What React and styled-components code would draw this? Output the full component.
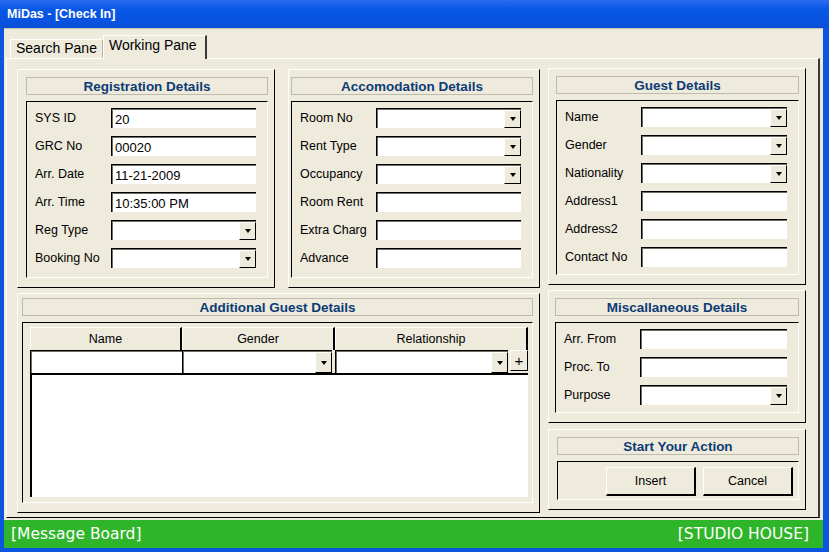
import React from "react";
import styled, { createGlobalStyle } from "styled-components";

const GlobalStyle = createGlobalStyle`
  html, body {
    margin: 0;
    padding: 0;
    background: #eeeadc;
  }
  body {
    font-family: "Liberation Sans", Arial, sans-serif;
    font-size: 12px;
    color: #000;
  }
`;

const Window = styled.div`
  width: 829px;
  height: 552px;
  display: flex;
  flex-direction: column;
  background: #0b55e0;
  overflow: hidden;
`;

const TitleBar = styled.div`
  height: 28px;
  flex: none;
  display: flex;
  align-items: center;
  padding-left: 7px;
  color: #fff;
  font-weight: bold;
  font-size: 12.5px;
  background: linear-gradient(#2a6cf0, #0a58e6 30%, #0853e0 75%, #0a4fd6);
`;

const Frame = styled.div`
  flex: 1;
  display: flex;
  flex-direction: column;
  padding: 0 6px 4px 4px;
  min-height: 0;
`;

const Client = styled.div`
  flex: 1;
  display: flex;
  flex-direction: column;
  background: #eeeadc;
  border-top: 1px solid #c9c4ae;
  padding: 6px 3px 2px 2px;
  min-height: 0;
`;

const TabStrip = styled.div`
  display: flex;
  align-items: flex-end;
  height: 23px;
  padding-left: 4px;
  position: relative;
  z-index: 1;
`;

const Tab = styled.div`
  box-sizing: border-box;
  height: ${(p) => (p.$active ? "24px" : "19px")};
  margin-bottom: ${(p) => (p.$active ? "-1px" : "0")};
  padding: 0 ${(p) => (p.$active ? "8px" : "5px")} 0 5px;
  display: flex;
  align-items: center;
  font-size: 14px;
  background: #eeeadc;
  border-top: 1px solid #fff;
  border-left: 1px solid #fff;
  border-right: ${(p) => (p.$active ? "2px solid #3a3a3a" : "1px solid #b9b5a2")};
  padding-top: 0;
  padding-bottom: ${(p) => (p.$active ? "6px" : "2px")};
`;

const TabPage = styled.div`
  flex: 1;
  display: flex;
  gap: 8px;
  border-top: 1px solid #fff;
  border-left: 1px solid #fff;
  border-right: 2px solid #3a3a3a;
  border-bottom: 1px solid #000;
  padding: 10px 0 0 10px;
  min-height: 0;
`;

const LeftCol = styled.div`
  width: 523px;
  display: flex;
  flex-direction: column;
  gap: 5px;
`;

const TopRow = styled.div`
  display: flex;
  gap: 13px;
`;

const RightCol = styled.div`
  width: 258px;
  display: flex;
  flex-direction: column;
  gap: 5px;
  margin-top: -1px;
`;

const Group = styled.div`
  box-sizing: border-box;
  width: ${(p) => p.$w || "auto"};
  height: ${(p) => p.$h};
  margin-top: ${(p) => p.$mt || "0"};
  display: flex;
  flex-direction: column;
  border-top: 1px solid #fff;
  border-left: 1px solid #fff;
  border-right: 1px solid #000;
  border-bottom: 1px solid #000;
  padding: ${(p) => p.$pt || "7px"} 6px 9px ${(p) => p.$pl || "7px"};
`;

const Header = styled.div`
  flex: none;
  box-sizing: border-box;
  height: 18px;
  margin-bottom: 6px;
  border: 1px solid #bdbab0;
  display: flex;
  align-items: center;
  justify-content: center;
  font-weight: bold;
  font-size: 13.5px;
  color: #0c3b77;
`;

const Inner = styled.div`
  flex: 1;
  min-height: 0;
  display: flex;
  flex-direction: column;
  border-top: 1px solid #000;
  border-left: 1px solid #000;
  border-right: 1px solid #fff;
  border-bottom: 1px solid #fff;
  padding: ${(p) => p.$pad || "6px 11px 8px 8px"};
`;

const Form = styled.div`
  display: grid;
  grid-template-columns: 76px 1fr;
  grid-auto-rows: 20px;
  row-gap: 8px;
`;

const Label = styled.div`
  display: flex;
  align-items: center;
  white-space: nowrap;
  font-size: 12.5px;
`;

const Field = styled.div`
  box-sizing: border-box;
  height: ${(p) => p.$h || "20px"};
  position: relative;
  background: #fff;
  border-top: 1px solid #000;
  border-left: 1px solid #000;
  box-shadow: inset 1px 1px 0 #6f6c62;
  display: flex;
  align-items: center;
  padding: 1px 0 0 3px;
  font-size: 13px;
  white-space: nowrap;
  overflow: hidden;
`;

const Arrow = styled.div`
  position: absolute;
  right: 0;
  top: 1px;
  bottom: 0;
  width: 17px;
  box-sizing: border-box;
  background: #eeeadc;
  border-top: 1px solid #fff;
  border-left: 1px solid #fff;
  border-right: 1px solid #000;
  border-bottom: 1px solid #000;
  display: flex;
  align-items: center;
  justify-content: center;
  &::after {
    content: "";
    width: 0;
    height: 0;
    border-left: 3.5px solid transparent;
    border-right: 3.5px solid transparent;
    border-top: 4px solid #000;
  }
`;

const Table = styled.div`
  flex: 1;
  display: grid;
  grid-template-columns: 152px 153px 1fr;
  grid-template-rows: 23px 23px 1fr;
`;

const ColHead = styled.div`
  box-sizing: border-box;
  display: flex;
  align-items: center;
  justify-content: center;
  font-size: 12.5px;
  border-top: 1px solid #fff;
  border-left: 1px solid #fff;
  border-right: 2px solid #000;
`;

const Cell = styled.div`
  display: flex;
  gap: 2px;
  padding-right: ${(p) => p.$pr || "0"};
  & > ${Field} {
    flex: 1;
    height: 23px;
  }
`;

const PlusButton = styled.div`
  box-sizing: border-box;
  width: 18px;
  height: 21px;
  display: flex;
  align-items: center;
  justify-content: center;
  font-size: 15px;
  background: #eeeadc;
  border-top: 1px solid #fff;
  border-left: 1px solid #fff;
  border-right: 1px solid #000;
  border-bottom: 1px solid #000;
`;

const List = styled.div`
  grid-column: 1 / -1;
  background: #fff;
  border-top: 2px solid #000;
  border-left: 2px solid #000;
`;

const Actions = styled.div`
  display: flex;
  justify-content: flex-end;
  gap: 7px;
`;

const Button = styled.div`
  box-sizing: border-box;
  width: 90px;
  height: 29px;
  display: flex;
  align-items: center;
  justify-content: center;
  font-size: 12.5px;
  background: #eeeadc;
  border-top: 1px solid #fff;
  border-left: 1px solid #fff;
  border-right: 2px solid #000;
  border-bottom: 2px solid #000;
`;

const StatusBar = styled.div`
  flex: none;
  height: 28px;
  display: flex;
  align-items: center;
  justify-content: space-between;
  padding: 0 14px 0 7px;
  background: #2fb52a;
  color: #fff;
  font-family: "DejaVu Sans", Verdana, sans-serif;
  font-size: 15.5px;
`;

const Row = ({ label, value, combo }) => (
  <>
    <Label>{label}</Label>
    <Field>
      {value}
      {combo && <Arrow />}
    </Field>
  </>
);

const registration = [
  { label: "SYS ID", value: "20" },
  { label: "GRC No", value: "00020" },
  { label: "Arr. Date", value: "11-21-2009" },
  { label: "Arr. Time", value: "10:35:00 PM" },
  { label: "Reg Type", combo: true },
  { label: "Booking No", combo: true },
];

const accommodation = [
  { label: "Room No", combo: true },
  { label: "Rent Type", combo: true },
  { label: "Occupancy", combo: true },
  { label: "Room Rent" },
  { label: "Extra Charg" },
  { label: "Advance" },
];

const guest = [
  { label: "Name", combo: true },
  { label: "Gender", combo: true },
  { label: "Nationality", combo: true },
  { label: "Address1" },
  { label: "Address2" },
  { label: "Contact No" },
];

const misc = [
  { label: "Arr. From" },
  { label: "Proc. To" },
  { label: "Purpose", combo: true },
];

const FormGroup = ({ title, rows, ...rest }) => (
  <Group {...rest}>
    <Header>{title}</Header>
    <Inner>
      <Form>
        {rows.map((r) => (
          <Row key={r.label} {...r} />
        ))}
      </Form>
    </Inner>
  </Group>
);

export default function App() {
  return (
    <>
      <GlobalStyle />
      <Window>
        <TitleBar>MiDas - [Check In]</TitleBar>
        <Frame>
          <Client>
            <TabStrip>
              <Tab>Search Pane</Tab>
              <Tab $active>Working Pane</Tab>
            </TabStrip>
            <TabPage>
              <LeftCol>
                <TopRow>
                  <FormGroup title="Registration Details" rows={registration} $w="258px" $h="219px" $pl="8px" />
                  <FormGroup title="Accomodation Details" rows={accommodation} $w="252px" $h="219px" $pl="2px" />
                </TopRow>
                <Group $h="220px" $pl="4px" $pt="4px">
                  <Header>Additional Guest Details</Header>
                  <Inner $pad="4px 4px 5px 7px">
                    <Table>
                      <ColHead>Name</ColHead>
                      <ColHead>Gender</ColHead>
                      <ColHead>Relationship</ColHead>
                      <Cell>
                        <Field />
                      </Cell>
                      <Cell $pr="3px">
                        <Field>
                          <Arrow />
                        </Field>
                      </Cell>
                      <Cell>
                        <Field>
                          <Arrow />
                        </Field>
                        <PlusButton>+</PlusButton>
                      </Cell>
                      <List />
                    </Table>
                  </Inner>
                </Group>
              </LeftCol>
              <RightCol>
                <FormGroup title="Guest Details" rows={guest} $h="217px" />
                <FormGroup title="Miscallaneous Details" rows={misc} $h="133px" $pl="6px" />
                <Group $h="81px" $pl="8px" $mt="1px">
                  <Header>Start Your Action</Header>
                  <Inner $pad="5px 5px 4px 8px">
                    <Actions>
                      <Button>Insert</Button>
                      <Button>Cancel</Button>
                    </Actions>
                  </Inner>
                </Group>
              </RightCol>
            </TabPage>
          </Client>
          <StatusBar>
            <span>[Message Board]</span>
            <span>[STUDIO HOUSE]</span>
          </StatusBar>
        </Frame>
      </Window>
    </>
  );
}
